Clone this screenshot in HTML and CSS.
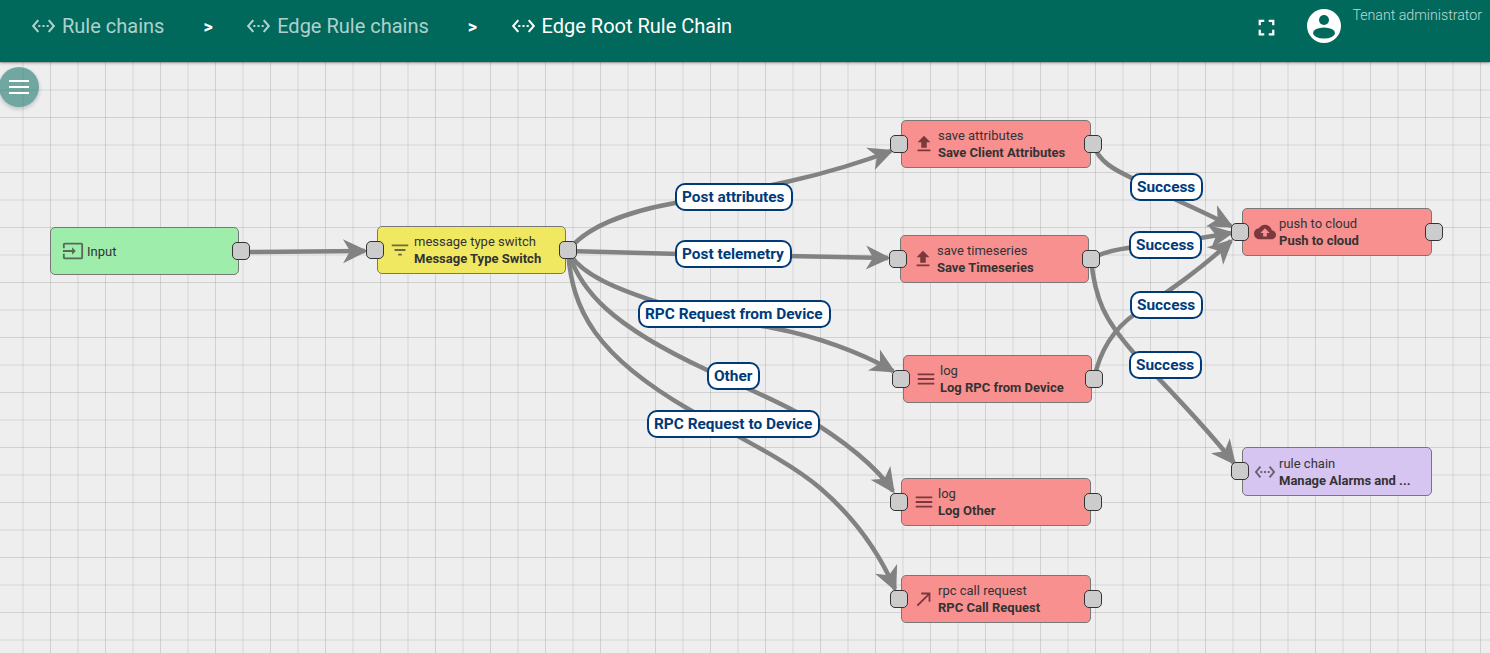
FILE: index.html
```html
<!DOCTYPE html>
<html lang="en">
<head>
<meta charset="utf-8">
<title>Edge Root Rule Chain</title>
<link rel="stylesheet" href="styles.css">
</head>
<body>
<header class="topbar">
  <nav class="crumbs">
    <a class="crumb"><svg class="crumb-icon" viewBox="0 0 24 24" preserveAspectRatio="none"><path d="M7.77 6.76L6.23 5.48.82 12l5.41 6.52 1.54-1.28L3.42 12l4.35-5.24zM7 13h2v-2H7v2zm10-2h-2v2h2v-2zm-6 2h2v-2h-2v2zm6.77-7.52l-1.54 1.28L20.58 12l-4.35 5.24 1.54 1.28L23.18 12l-5.41-6.52z"/></svg><span>Rule chains</span></a>
    <span class="sep">&gt;</span>
    <a class="crumb"><svg class="crumb-icon" viewBox="0 0 24 24" preserveAspectRatio="none"><path d="M7.77 6.76L6.23 5.48.82 12l5.41 6.52 1.54-1.28L3.42 12l4.35-5.24zM7 13h2v-2H7v2zm10-2h-2v2h2v-2zm-6 2h2v-2h-2v2zm6.77-7.52l-1.54 1.28L20.58 12l-4.35 5.24 1.54 1.28L23.18 12l-5.41-6.52z"/></svg><span>Edge Rule chains</span></a>
    <span class="sep">&gt;</span>
    <a class="crumb crumb-current"><svg class="crumb-icon" viewBox="0 0 24 24" preserveAspectRatio="none"><path d="M7.77 6.76L6.23 5.48.82 12l5.41 6.52 1.54-1.28L3.42 12l4.35-5.24zM7 13h2v-2H7v2zm10-2h-2v2h2v-2zm-6 2h2v-2h-2v2zm6.77-7.52l-1.54 1.28L20.58 12l-4.35 5.24 1.54 1.28L23.18 12l-5.41-6.52z"/></svg><span>Edge Root Rule Chain</span></a>
  </nav>
  <div class="user-area">
    <svg class="fullscreen" viewBox="0 0 24 24"><path d="M7 14H5v5h5v-2H7v-3zm-2-4h2V7h3V5H5v5zm12 7h-3v2h5v-5h-2v3zM14 5v2h3v3h2V5h-5z"/></svg>
    <svg class="avatar" viewBox="0 0 34 34"><circle class="avatar-bg" cx="17" cy="17" r="17"/><circle class="avatar-fg" cx="17" cy="11" r="5"/><ellipse class="avatar-fg" cx="17" cy="24" rx="11" ry="5.6"/></svg>
    <span class="user-role">Tenant administrator</span>
  </div>
</header>
<main class="canvas">
  <button class="menu-btn" aria-label="Menu"><span></span><span></span><span></span></button>

  <svg class="edges" viewBox="0 62 1490 591">
    <defs>
      <marker id="arrow" markerUnits="userSpaceOnUse" markerWidth="30" markerHeight="30" viewBox="0 0 30 30" refX="25" refY="15" orient="auto">
        <path class="arrow-head" d="M28 15 L3 3 L10 15 L3 27 Z"/>
      </marker>
    </defs>
    <path class="edge" d="M241 252 L365 251"/>
    <path class="edge" d="M568 251 C585 228 625 212 675 203 C730 193 810 182 891 151"/>
    <path class="edge" d="M568 251 L680 254 L888 258"/>
    <path class="edge" d="M568 251 C580 275 620 290 657 302 C700 316 730 320 773 328 C815 336 860 352 893 371"/>
    <path class="edge" d="M568 251 C580 290 610 325 707 370 C740 385 775 400 800 414 C840 438 875 465 893 491"/>
    <path class="edge" d="M568 251 C572 310 595 355 690 410 C740 438 790 462 820 488 C855 518 880 555 895 589"/>
    <path class="edge" d="M1093 144 C1100 165 1120 172 1140 182 C1170 198 1200 210 1231 226"/>
    <path class="edge" d="M1091 259 C1105 250 1130 247 1170 243 L1231 233"/>
    <path class="edge" d="M1094 379 C1100 350 1115 328 1135 314 C1170 290 1200 270 1231 241"/>
    <path class="edge" d="M1091 259 C1095 300 1105 320 1133 352 C1160 380 1200 420 1234 463"/>
  </svg>

  <div class="node node-input n-input">
    <svg class="node-icon" viewBox="0 0 24 24"><path d="M21 3.01H3c-1.1 0-2 .9-2 2V9h2V4.99h18v14.03H3V15H1v4.01c0 1.1.9 1.98 2 1.98h18c1.1 0 2-.88 2-1.98v-14c0-1.11-.9-2-2-2zM11 16l4-4-4-4v3H1v2h10v3z"/></svg>
    <div class="node-text"><div>Input</div></div>
    <span class="port port-out"></span>
  </div>

  <div class="node node-filter n-switch">
    <span class="port port-in"></span>
    <svg class="node-icon" viewBox="0 0 24 24"><path d="M10 18h4v-2h-4v2zM3 6v2h18V6H3zm3 7h12v-2H6v2z"/></svg>
    <div class="node-text"><div>message type switch</div><div class="node-name">Message Type Switch</div></div>
    <span class="port port-out"></span>
  </div>

  <div class="node node-action n-attrs">
    <span class="port port-in"></span>
    <svg class="node-icon" viewBox="0 0 24 24"><path d="M9 16h6v-6h4l-7-7-7 7h4zm-4 2h14v2H5z"/></svg>
    <div class="node-text"><div>save attributes</div><div class="node-name">Save Client Attributes</div></div>
    <span class="port port-out"></span>
  </div>

  <div class="node node-action n-ts">
    <span class="port port-in"></span>
    <svg class="node-icon" viewBox="0 0 24 24"><path d="M9 16h6v-6h4l-7-7-7 7h4zm-4 2h14v2H5z"/></svg>
    <div class="node-text"><div>save timeseries</div><div class="node-name">Save Timeseries</div></div>
    <span class="port port-out"></span>
  </div>

  <div class="node node-action n-logrpc">
    <span class="port port-in"></span>
    <svg class="node-icon" viewBox="0 0 24 24"><path d="M3 18h18v-2H3v2zm0-5h18v-2H3v2zm0-7v2h18V6H3z"/></svg>
    <div class="node-text"><div>log</div><div class="node-name">Log RPC from Device</div></div>
    <span class="port port-out"></span>
  </div>

  <div class="node node-action n-logother">
    <span class="port port-in"></span>
    <svg class="node-icon" viewBox="0 0 24 24"><path d="M3 18h18v-2H3v2zm0-5h18v-2H3v2zm0-7v2h18V6H3z"/></svg>
    <div class="node-text"><div>log</div><div class="node-name">Log Other</div></div>
    <span class="port port-out"></span>
  </div>

  <div class="node node-action n-rpc">
    <span class="port port-in"></span>
    <svg class="node-icon" viewBox="0 0 24 24"><path d="M9 5v2h6.59L4 18.59 5.41 20 17 8.41V15h2V5z"/></svg>
    <div class="node-text"><div>rpc call request</div><div class="node-name">RPC Call Request</div></div>
    <span class="port port-out"></span>
  </div>

  <div class="node node-action n-push">
    <span class="port port-in"></span>
    <svg class="node-icon" viewBox="0 0 24 24"><path d="M19.35 10.04C18.67 6.59 15.64 4 12 4 9.11 4 6.6 5.64 5.35 8.04 2.34 8.36 0 10.91 0 14c0 3.31 2.69 6 6 6h13c2.76 0 5-2.24 5-5 0-2.64-2.05-4.78-4.65-4.96zM14 13v4h-4v-4H7l5-5 5 5h-3z"/></svg>
    <div class="node-text"><div>push to cloud</div><div class="node-name">Push to cloud</div></div>
    <span class="port port-out"></span>
  </div>

  <div class="node node-chain n-chain">
    <span class="port port-in"></span>
    <svg class="node-icon" viewBox="0 0 24 24"><path d="M7.77 6.76L6.23 5.48.82 12l5.41 6.52 1.54-1.28L3.42 12l4.35-5.24zM7 13h2v-2H7v2zm10-2h-2v2h2v-2zm-6 2h2v-2h-2v2zm6.77-7.52l-1.54 1.28L20.58 12l-4.35 5.24 1.54 1.28L23.18 12l-5.41-6.52z"/></svg>
    <div class="node-text"><div>rule chain</div><div class="node-name">Manage Alarms and ...</div></div>
  </div>

  <span class="edge-label l-attrs">Post attributes</span>
  <span class="edge-label l-tele">Post telemetry</span>
  <span class="edge-label l-rpcfrom">RPC Request from Device</span>
  <span class="edge-label l-other">Other</span>
  <span class="edge-label l-rpcto">RPC Request to Device</span>
  <span class="edge-label l-s1">Success</span>
  <span class="edge-label l-s2">Success</span>
  <span class="edge-label l-s3">Success</span>
  <span class="edge-label l-s4">Success</span>
</main>
</body>
</html>
```
FILE: styles.css
```css
* { box-sizing: border-box; }
html, body { margin: 0; height: 100%; overflow: hidden; }
body {
  display: flex;
  flex-direction: column;
  font-family: Roboto, "Helvetica Neue", sans-serif;
  background: #eee;
}

/* top bar */
.topbar {
  flex: 0 0 62px;
  height: 62px;
  display: flex;
  justify-content: space-between;
  background: #00695c;
  color: #fff;
  box-shadow: 0 1px 3px rgba(0, 0, 0, .35);
  position: relative;
  z-index: 2;
}
.crumbs {
  display: flex;
  align-items: center;
  height: 52px;
  padding-left: 31px;
}
.crumb {
  display: flex;
  align-items: center;
  gap: 6px;
  font-size: 20px;
  color: rgba(255, 255, 255, .7);
}
.crumb-current { color: #fff; }
.crumb-icon {
  width: 25px;
  height: 24px;
  fill: currentColor;
}
.sep {
  font-size: 18px;
  font-weight: 700;
  color: #fff;
  margin: 0 33.5px 0 39px;
}
.user-area {
  display: flex;
  align-items: flex-start;
  padding-right: 8px;
}
.fullscreen {
  width: 27px;
  height: 27px;
  fill: #fff;
  margin-top: 14px;
  margin-right: 27px;
}
.avatar {
  width: 34px;
  height: 34px;
  margin-top: 9px;
  margin-right: 11px;
}
.avatar-bg { fill: #fff; }
.avatar-fg { fill: #00695c; }
.user-role {
  font-size: 14.2px;
  font-weight: 300;
  line-height: 16px;
  margin-top: 7px;
  color: rgba(255, 255, 255, .75);
}

/* canvas */
.canvas {
  flex: 1;
  position: relative;
  overflow: hidden;
  background-color: #eee;
  background-image:
    linear-gradient(90deg, transparent 22px, rgba(0, 0, 0, .05) 22px, rgba(0, 0, 0, .05) 24px, transparent 24px, transparent 50px, rgba(0, 0, 0, .12) 50px, rgba(0, 0, 0, .12) 51px, transparent 51px),
    linear-gradient(180deg, rgba(0, 0, 0, .12) 0, rgba(0, 0, 0, .12) 1px, transparent 1px, transparent 27px, rgba(0, 0, 0, .05) 27px, rgba(0, 0, 0, .05) 29px, transparent 29px);
  background-size: 55px 55px;
}
.menu-btn {
  position: absolute;
  left: -1px;
  top: 5px;
  width: 40px;
  height: 40px;
  padding: 0;
  border: 0;
  border-radius: 50%;
  background: rgba(0, 105, 92, .53);
  box-shadow: 0 2px 4px rgba(0, 0, 0, .2);
  display: flex;
  flex-direction: column;
  align-items: center;
  justify-content: center;
  gap: 4px;
  z-index: 3;
}
.menu-btn span {
  width: 20px;
  height: 2px;
  background: #fff;
}
.edges {
  position: absolute;
  left: 0;
  top: 0;
  width: 1490px;
  height: 591px;
}
.edge {
  fill: none;
  stroke: #828282;
  stroke-width: 4.5px;
  marker-end: url(#arrow);
}
.arrow-head { fill: #828282; }

/* nodes */
.node {
  position: absolute;
  width: 190px;
  height: 48px;
  display: flex;
  align-items: center;
  gap: 3px;
  padding-left: 11px;
  border: 1px solid #777;
  border-radius: 5px;
  font-size: 13px;
  line-height: 17px;
  color: #333;
}
.node-input { background: #9fedaa; width: 189px; }
.node-filter { background: #f1e861; width: 189px; }
.node-action { background: #f89090; }
.node-chain { background: #d6c4f1; height: 49px; }
.node-icon {
  flex: none;
  width: 22px;
  height: 22px;
  fill: rgba(51, 51, 51, .7);
}
.node-action .node-icon { fill: rgba(70, 20, 25, .7); }
.node-name { font-weight: 700; }
.port {
  position: absolute;
  top: 14px;
  width: 18px;
  height: 18px;
  background: #ccc;
  border: 1px solid #333;
  border-radius: 5px;
  z-index: 1;
}
.port-in { left: -12px; }
.port-out { right: -12px; }

.n-input { left: 50px; top: 165px; }
.n-switch { left: 377px; top: 164px; }
.n-attrs { left: 901px; top: 58px; }
.n-ts { left: 900px; top: 173px; width: 189px; }
.n-logrpc { left: 903px; top: 293px; width: 189px; }
.n-logother { left: 901px; top: 416px; }
.n-rpc { left: 901px; top: 513px; }
.n-push { left: 1242px; top: 146px; }
.n-chain { left: 1242px; top: 385px; }

/* edge labels */
.edge-label {
  position: absolute;
  height: 28px;
  padding: 0 6px 0 5px;
  border: 2px solid #003a79;
  border-radius: 10px;
  background: #fff;
  color: #003a79;
  font-size: 15.4px;
  font-weight: 700;
  line-height: 25px;
  white-space: nowrap;
}
.l-attrs { left: 675px; top: 121px; }
.l-tele { left: 675px; top: 178px; }
.l-rpcfrom { left: 638px; top: 238px; }
.l-other { left: 707px; top: 300px; }
.l-rpcto { left: 647px; top: 348px; }
.l-s1 { left: 1130px; top: 111px; }
.l-s2 { left: 1129px; top: 169px; }
.l-s3 { left: 1130px; top: 229px; }
.l-s4 { left: 1129px; top: 289px; }
```
